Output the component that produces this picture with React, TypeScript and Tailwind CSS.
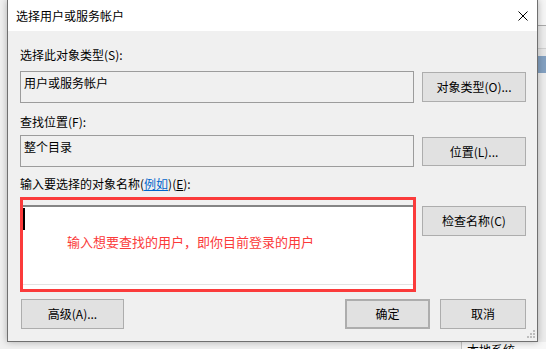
import React from "react";

function Btn({ children, className = "" }: { children: React.ReactNode; className?: string }) {
  return (
    <div
      className={
        "flex items-center justify-center bg-[#e1e1e1] border border-[#adadad] text-[12px] leading-[16px] text-black " +
        className
      }
    >
      {children}
    </div>
  );
}

function Dialog() {
  return (
    <div className="relative z-10 w-[531px] h-[342px] flex flex-col border-x border-b border-[#707070] shadow-[0_0_7px_rgba(0,0,0,0.28)]">
      <div className="h-[31px] bg-white flex items-center justify-between pl-[8px] pr-[9px]">
        <span className="text-[12px] leading-[16px] text-black">选择用户或服务帐户</span>
        <svg width="10" height="10" viewBox="0 0 10 10" className="block">
          <path d="M0.5 0.5 L9.5 9.5 M9.5 0.5 L0.5 9.5" stroke="#000" strokeWidth="1" fill="none" />
        </svg>
      </div>
      <div className="relative flex-1 bg-[#f0f0f0] pl-[12px] pr-[11px] flex flex-col">
        <div className="mt-[16px] h-[16px] leading-[16px]">选择此对象类型(S):</div>
        <div className="mt-[8px] flex gap-[8px] items-start">
          <div className="w-[394px] h-[32px] border border-[#9c9c9c] bg-[#f0f0f0] pl-[3px] pt-[3px] leading-[16px]">
            用户或服务帐户
          </div>
          <Btn className="mt-[1px] w-[104px] h-[30px]">对象类型(O)...</Btn>
        </div>
        <div className="mt-[11px] h-[16px] leading-[16px]">查找位置(F):</div>
        <div className="mt-[5px] flex gap-[8px] items-start">
          <div className="w-[394px] h-[32px] border border-[#9c9c9c] bg-[#f0f0f0] pl-[3px] pt-[3px] leading-[16px]">
            整个目录
          </div>
          <Btn className="mt-[2px] w-[104px] h-[29px]">位置(L)...</Btn>
        </div>
        <div className="mt-[9px] h-[16px] leading-[16px]">
          输入要选择的对象名称(<span className="text-[#0066cc] underline">例如</span>)(
          <span className="underline">E</span>):
        </div>
        <div className="mt-[5px] flex gap-[6px] items-start">
          <div className="w-[396px] h-[95px] border-[3px] border-[#fb3b3b] bg-[#f0f0f0] flex flex-col">
            <div className="h-[5px]" />
            <div className="h-[2px] bg-[#858585]" />
            <div className="h-[77px] bg-white flex items-start">
              <div className="mt-[1px] w-[2px] h-[22px] bg-black" />
              <div className="ml-[42px] mt-[26px] text-[13px] leading-[18px] text-[#fb3a3a] whitespace-nowrap">
                输入想要查找的用户，即你目前登录的用户
              </div>
            </div>
            <div className="h-[1px] bg-[#e3e3e3]" />
            <div className="flex-1 bg-white" />
          </div>
          <Btn className="mt-[9px] w-[104px] h-[30px]">检查名称(C)</Btn>
        </div>
        <div className="mt-[7px] flex items-start">
          <Btn className="ml-[1px] w-[103px] h-[30px]">高级(A)...</Btn>
          <div className="flex-1" />
          <Btn className="w-[85px] h-[30px] border-2 border-[#0078d7]">确定</Btn>
          <Btn className="ml-[10px] w-[86px] h-[30px]">取消</Btn>
        </div>
        <svg width="8" height="8" viewBox="0 0 8 8" className="absolute right-[2px] bottom-[3px]">
          <rect x="6" y="0" width="2" height="2" fill="#bdbdbd" />
          <rect x="3" y="3" width="2" height="2" fill="#bdbdbd" />
          <rect x="6" y="3" width="2" height="2" fill="#bdbdbd" />
          <rect x="0" y="6" width="2" height="2" fill="#bdbdbd" />
          <rect x="3" y="6" width="2" height="2" fill="#bdbdbd" />
          <rect x="6" y="6" width="2" height="2" fill="#bdbdbd" />
        </svg>
      </div>
    </div>
  );
}

export default function App() {
  return (
    <div className="w-[546px] h-[349px] overflow-hidden flex flex-col bg-[#f0f0f0] font-['Noto_Sans_CJK_SC',sans-serif] text-[12px] text-black">
      <div className="flex h-[342px]">
        <div className="w-[7px] bg-[#f0f0f0]" />
        <Dialog />
        <div className="w-[8px] flex flex-col">
          <div className="h-[25px] bg-[#f5f5f5]" />
          <div className="h-[1px] bg-[#a9a9a9]" />
          <div className="h-[22px] bg-[#ececec]" />
          <div className="h-[1px] bg-[#cfcfcf]" />
          <div className="h-[7px] bg-[#e6e6e6]" />
          <div className="h-[17px] bg-[#83a0c0]" />
          <div className="flex-1 bg-[#ececec]" />
        </div>
      </div>
      <div className="h-[7px] flex overflow-hidden bg-[#f0f0f0]">
        <div className="w-[461px]" />
        <div className="w-[1px] bg-[#c4c4c4]" />
        <div className="flex-1 bg-[#f7f7f7] pl-[5px] leading-[16px] text-[12px] whitespace-nowrap">本地系统</div>
      </div>
    </div>
  );
}
